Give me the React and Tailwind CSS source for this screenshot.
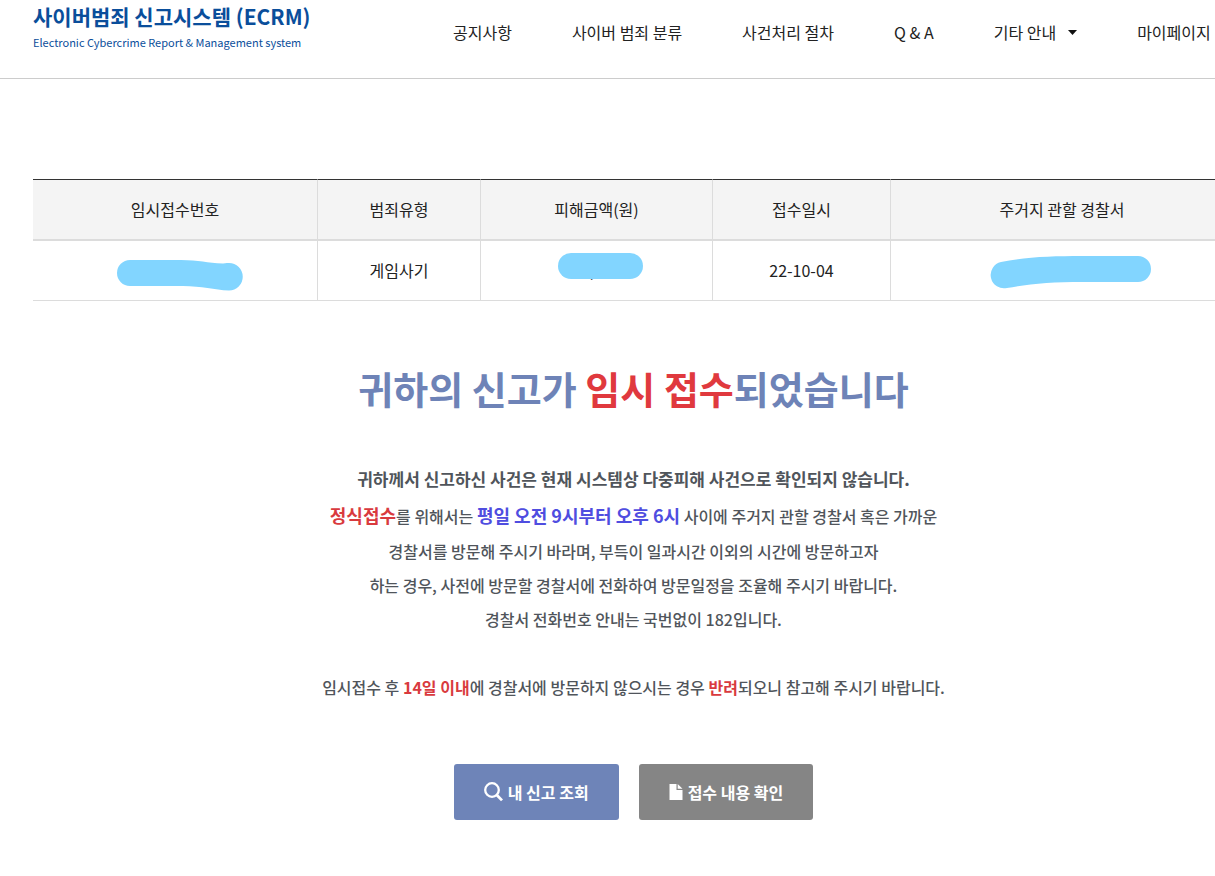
import React from 'react';

const menuItems = [
    { label: '공지사항' },
    { label: '사이버 범죄 분류' },
    { label: '사건처리 절차' },
    { label: 'Q & A' },
    { label: '기타 안내', dropdown: true },
    { label: '마이페이지' },
];

const columns = [
    { label: '임시접수번호', width: 'w-[285px]' },
    { label: '범죄유형', width: 'w-[163px]' },
    { label: '피해금액(원)', width: 'w-[232px]' },
    { label: '접수일시', width: 'w-[178px]' },
    { label: '주거지 관할 경찰서', width: '' },
];

// Marker strokes that hide the private values
function HiddenNumber() {
    return (
        <svg className="mx-auto block" width="284" height="56" viewBox="0 1 284 56" aria-hidden="true">
            <path
                d="M97 19 H148 C166 19 174 22 190 22.5 C193 22 195 22 196 22 A13.5 13.5 0 0 1 196 49.5 C181 49 169 45 150 45 H97 A13 13 0 0 1 97 19 Z"
                fill="#82d5ff"
            />
        </svg>
    );
}

function HiddenAmount() {
    return (
        <svg className="mx-auto block" width="231" height="56" viewBox="0 1 231 56" aria-hidden="true">
            <text x="109" y="36" fontSize="16" fill="#222">,</text>
            <rect x="77" y="12" width="85" height="26" rx="13" fill="#82d5ff" />
        </svg>
    );
}

function HiddenStation() {
    return (
        <svg className="mx-auto block" width="342" height="56" viewBox="0 1 342 56" aria-hidden="true">
            <path
                d="M109 21 C133 16 160 15 190 15 H246 A13 13 0 0 1 246 41 H190 C160 41 136 43 115 47 A13 13 0 0 1 109 21 Z"
                fill="#82d5ff"
            />
        </svg>
    );
}

function SearchIcon() {
    return (
        <svg width="19" height="20" viewBox="0 0 19 20" fill="none" stroke="currentColor" aria-hidden="true">
            <circle cx="8" cy="8" r="6.8" strokeWidth="2.3" />
            <path d="M12.8 13 L18 18.4" strokeWidth="2.8" />
        </svg>
    );
}

function FileIcon() {
    return (
        <svg width="14" height="16" viewBox="0 0 14 16" fill="currentColor" aria-hidden="true">
            <path d="M0.5 0 H7.5 V6 H13.5 V16 H0.5 Z" />
            <path d="M8.7 0 L13.5 4.8 H8.7 Z" />
        </svg>
    );
}

export default function App() {
    return (
        <div className="overflow-x-hidden bg-white pb-[55px] font-['Noto_Sans_CJK_KR','Noto_Sans',sans-serif] text-base text-[#222]">
            <header className="flex h-[79px] border-b border-[#ccc] pl-[33px]">
                <a href="#" className="w-[420px] shrink-0 pt-[3px] text-[#0a4e9b]">
                    <strong className="block text-[21px] leading-[26px] font-bold whitespace-nowrap">사이버범죄 신고시스템 (ECRM)</strong>
                    <span className="block text-[11px] leading-[26px] whitespace-nowrap">Electronic Cybercrime Report &amp; Management system</span>
                </a>
                <nav className="flex h-16 items-center gap-[60px]">
                    {menuItems.map((item) => (
                        <a key={item.label} href="#" className="flex shrink-0 items-center gap-3 whitespace-nowrap">
                            {item.label}
                            {item.dropdown && (
                                <svg width="9" height="5" viewBox="0 0 9 5" aria-hidden="true">
                                    <path d="M0 0 H9 L4.5 5 Z" fill="#111" />
                                </svg>
                            )}
                        </a>
                    ))}
                </nav>
            </header>

            <main className="mt-[100px] -mr-[19px] ml-[33px]">
                <table className="w-full table-fixed border-separate border-spacing-0 text-center">
                    <thead>
                        <tr>
                            {columns.map((col) => (
                                <th
                                    key={col.label}
                                    className={`h-[62px] border-t border-r border-b-2 border-[#dcdcdc] border-t-[#333] bg-[#f4f4f4] p-0 pb-0.5 font-normal ${col.width}`}
                                >
                                    {col.label}
                                </th>
                            ))}
                        </tr>
                    </thead>
                    <tbody>
                        <tr>
                            <td className="h-[60px] border-r border-b border-[#dcdcdc] p-0 pb-0.5"><HiddenNumber /></td>
                            <td className="border-r border-b border-[#dcdcdc] p-0 pb-0.5">게임사기</td>
                            <td className="border-r border-b border-[#dcdcdc] p-0 pb-0.5"><HiddenAmount /></td>
                            <td className="border-r border-b border-[#dcdcdc] p-0 pb-0.5">22-10-04</td>
                            <td className="border-b border-[#dcdcdc] p-0 pb-0.5"><HiddenStation /></td>
                        </tr>
                    </tbody>
                </table>

                <section className="text-center font-medium text-[#50555b]">
                    <h1 className="mt-[59px] text-[38px] leading-[56px] font-bold text-[#6e83b7]">
                        귀하의 신고가 <span className="text-[#e0393e]">임시 접수</span>되었습니다
                    </h1>
                    <p className="mt-[45px] text-[17px] leading-[36px] font-bold">
                        귀하께서 신고하신 사건은 현재 시스템상 다중피해 사건으로 확인되지 않습니다.
                    </p>
                    <p className="leading-[36px]">
                        <strong className="text-lg leading-[36px] font-bold text-[#d93a3e]">정식접수</strong>를 위해서는{' '}
                        <strong className="text-lg leading-[36px] font-bold text-[#4f4de0]">평일 오전 9시부터 오후 6시</strong> 사이에 주거지 관할 경찰서 혹은 가까운
                    </p>
                    <p className="leading-[34px]">
                        경찰서를 방문해 주시기 바라며, 부득이 일과시간 이외의 시간에 방문하고자<br />
                        하는 경우, 사전에 방문할 경찰서에 전화하여 방문일정을 조율해 주시기 바랍니다.<br />
                        경찰서 전화번호 안내는 국번없이 182입니다.
                    </p>
                    <p className="mt-[34px] leading-[34px]">
                        임시접수 후 <strong className="font-bold text-[#d93a3e]">14일 이내</strong>에 경찰서에 방문하지 않으시는 경우{' '}
                        <strong className="font-bold text-[#d93a3e]">반려</strong>되오니 참고해 주시기 바랍니다.
                    </p>
                </section>

                <div className="mt-[60px] flex justify-center gap-5 font-bold text-white">
                    <button type="button" className="flex h-14 items-center gap-[5px] rounded-[3px] bg-[#6e84b8] px-[30px]">
                        <SearchIcon />
                        내 신고 조회
                    </button>
                    <button type="button" className="flex h-14 items-center gap-[5px] rounded-[3px] bg-[#858585] px-[30px]">
                        <FileIcon />
                        접수 내용 확인
                    </button>
                </div>
            </main>
        </div>
    );
}
